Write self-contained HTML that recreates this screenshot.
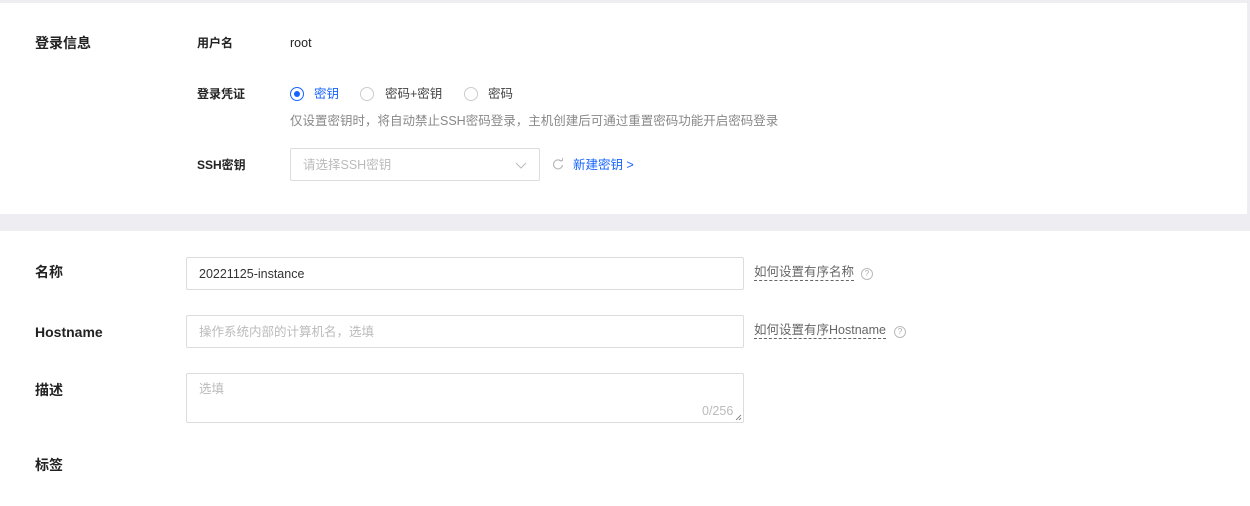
<!DOCTYPE html>
<html><head><meta charset="utf-8"><style>
*{margin:0;padding:0;box-sizing:border-box}
body{width:1250px;height:506px;background:#fff;font-family:"Liberation Sans","Noto Sans CJK SC",sans-serif;color:#000;position:relative;overflow:hidden}
.a{position:absolute;white-space:nowrap;line-height:16px}
.top{position:absolute;left:0;top:0;width:1250px;height:3px;background:#eeeef2}
.rb{position:absolute;left:1247px;top:0;width:3px;height:215px;background:#eeeef2}
.band{position:absolute;left:0;top:214px;width:1250px;height:17px;background:#eeeef2}
.h{font-size:14px;font-weight:600;color:#222}
.l{font-size:12px;font-weight:600;color:#222}
.t{font-size:12.5px;color:#222}
.g{font-size:12.5px;color:#888}
.box{position:absolute;border:1px solid #dcdcdc;border-radius:2px;background:#fff}
.ph{font-size:12.5px;color:#bbb}
.rad{position:absolute;width:14px;height:14px;border:1px solid #ccc;border-radius:50%}
.hint{font-size:12.5px;color:#666;border-bottom:1px dashed #666;line-height:15px}
.q{position:absolute;width:12px;height:12px;border:1px solid #bbb;border-radius:50%;font-size:8px;color:#aaa;text-align:center;line-height:10px}
</style></head><body>
<div class="top"></div><div class="rb"></div><div class="band"></div>
<div class="a h" style="left:35px;top:35px">登录信息</div>
<div class="a l" style="left:197px;top:35px">用户名</div>
<div class="a t" style="left:290px;top:35px">root</div>
<div class="a l" style="left:197px;top:86px">登录凭证</div>
<div class="rad" style="left:290px;top:87px;border-color:#1664ff"><div style="position:absolute;left:3px;top:3px;width:6px;height:6px;border-radius:50%;background:#1664ff"></div></div>
<div class="a t" style="left:314px;top:86px;color:#1664ff">密钥</div>
<div class="rad" style="left:360px;top:87px"></div>
<div class="a t" style="left:385px;top:86px;color:#444">密码+密钥</div>
<div class="rad" style="left:464px;top:87px"></div>
<div class="a t" style="left:488px;top:86px;color:#444">密码</div>
<div class="a g" style="left:290px;top:113px">仅设置密钥时，将自动禁止SSH密码登录，主机创建后可通过重置密码功能开启密码登录</div>
<div class="a l" style="left:197px;top:157px">SSH密钥</div>
<div class="box" style="left:290px;top:148px;width:250px;height:33px"><div class="a ph" style="left:12px;top:8px">请选择SSH密钥</div>
<svg class="a" style="left:224px;top:11px" width="12" height="10"><path d="M1 3l5 5 5-5" fill="none" stroke="#bbb" stroke-width="1"/></svg></div>
<svg class="a" style="left:552px;top:158px" width="12" height="12"><path d="M9.5 3.5A4.5 4.5 0 1 0 10.5 7" fill="none" stroke="#bbb" stroke-width="1.2"/><path d="M7 2.5h3.5V0" fill="none" stroke="#bbb" stroke-width="1"/></svg>
<div class="a t" style="left:573px;top:157px;color:#1664ff">新建密钥 &gt;</div>
<div class="a h" style="left:35px;top:264px">名称</div>
<div class="box" style="left:186px;top:257px;width:558px;height:33px"><div class="a t" style="left:12px;top:8px;color:#333">20221125-instance</div></div>
<div class="a hint" style="left:754px;top:265px">如何设置有序名称</div>
<div class="q" style="left:861px;top:268px">?</div>
<div class="a h" style="left:35px;top:324px">Hostname</div>
<div class="box" style="left:186px;top:315px;width:558px;height:33px"><div class="a ph" style="left:12px;top:8px">操作系统内部的计算机名，选填</div></div>
<div class="a hint" style="left:754px;top:323px">如何设置有序Hostname</div>
<div class="q" style="left:894px;top:326px">?</div>
<div class="a h" style="left:35px;top:382px">描述</div>
<div class="box" style="left:186px;top:373px;width:558px;height:50px"><div class="a ph" style="left:12px;top:7px">选填</div><div class="a ph" style="left:515px;top:29px">0/256</div>
<svg class="a" style="left:548px;top:40px" width="7" height="7"><path d="M6 1L1 6M6 4L4 6" stroke="#666" stroke-width="0.8"/></svg></div>
<div class="a h" style="left:35px;top:457px">标签</div>
</body></html>
